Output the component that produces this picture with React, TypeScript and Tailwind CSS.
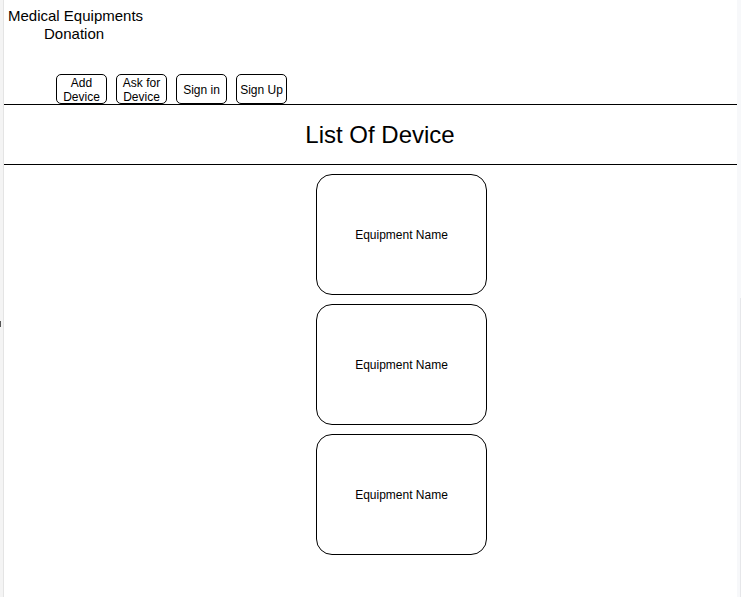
const cards = ["Equipment Name", "Equipment Name", "Equipment Name"];

const buttons = [
  ["Add", "Device"],
  ["Ask for", "Device"],
  ["Sign in"],
  ["Sign Up"],
];

export default function App() {
  return (
    <div
      className="flex h-[597px] w-[741px] overflow-hidden bg-white text-black"
      style={{ fontFamily: '"Liberation Sans", Arial, sans-serif' }}
    >
      {/* left gutter */}
      <div className="relative w-[4px] shrink-0 border-r border-[#e4e4e4] bg-[#f4f4f4]">
        <div className="absolute left-0 top-[321px] h-[6px] w-[1px] bg-[#555]" />
      </div>

      <div className="flex w-[733px] shrink-0 flex-col">
        {/* header */}
        <div className="flex h-[104px] flex-col justify-between">
          <div className="ml-[4px] mt-[7px] flex w-fit flex-col items-center text-[15px] leading-[18px]">
            <span>Medical Equipments</span>
            <span className="pr-[3px]">Donation</span>
          </div>
          <div className="ml-[52px] flex gap-[9px]">
            {buttons.map((b, i) => (
              <div
                key={i}
                className="flex h-[30px] w-[51px] flex-col items-center justify-center rounded-[5px] border border-black pt-[2px] text-[12px] leading-[14px]"
              >
                {b.map((t) => (
                  <span key={t}>{t}</span>
                ))}
              </div>
            ))}
          </div>
        </div>
        <div className="h-px bg-black" />

        {/* title */}
        <div className="flex h-[59px] items-center justify-center pl-[19px] text-[24px]">
          List Of Device
        </div>
        <div className="h-px bg-black" />

        {/* device list */}
        <div className="mt-[9px] flex flex-col gap-[9px] pl-[312px]">
          {cards.map((c, i) => (
            <div
              key={i}
              className="flex h-[121px] w-[171px] items-center justify-center rounded-[16px] border border-black text-[12px]"
            >
              {c}
            </div>
          ))}
        </div>
      </div>

      {/* right gutter */}
      <div className="flex w-[4px] shrink-0 justify-end bg-[#f7f8fa] pt-[298px]">
        <div className="h-full w-px bg-[#e6e7ea]" />
      </div>
    </div>
  );
}
